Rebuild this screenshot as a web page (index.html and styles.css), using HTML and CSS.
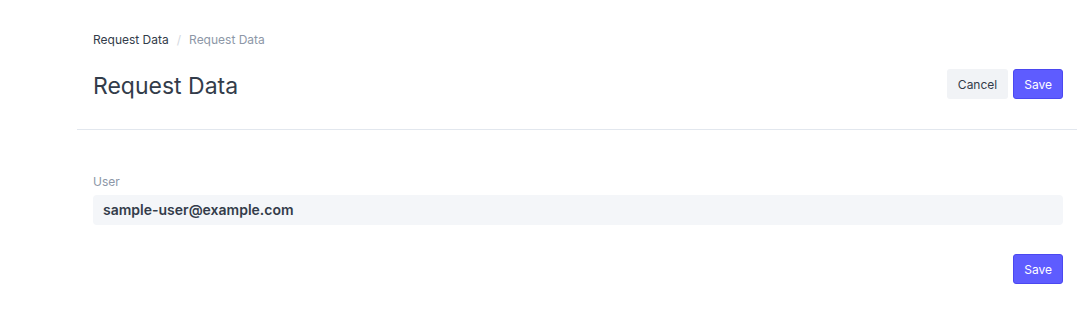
FILE: index.html
```html
<!DOCTYPE html>
<html lang="en">
<head>
    <meta charset="UTF-8">
    <meta name="viewport" content="width=device-width, initial-scale=1.0">
    <title>Request Data</title>
    <link rel="stylesheet" href="styles.css">
</head>
<body>
    <div class="page">
        <div class="page-header">
            <div class="breadcrumb">
                <span class="crumb">Request Data</span>
                <span class="crumb-sep">/</span>
                <span class="crumb current">Request Data</span>
            </div>
            <div class="title-row">
                <h1 class="page-title">Request Data</h1>
                <div class="actions">
                    <button class="btn btn-secondary">Cancel</button>
                    <button class="btn btn-primary">Save</button>
                </div>
            </div>
        </div>

        <div class="page-body">
            <div class="field">
                <label class="field-label">User</label>
                <div class="field-value">sample-user@example.com</div>
            </div>
            <div class="form-footer">
                <button class="btn btn-primary">Save</button>
            </div>
        </div>
    </div>
</body>
</html>
```

FILE: styles.css
```css
body {
    margin: 0;
    font-family: Inter, "Noto Sans", sans-serif;
    color: #333c4a;
    background-color: #fff;
}

.page {
    margin-left: 77px;
    width: 1000px;
}

.page-header {
    padding: 32px 14px 0 16px;
    border-bottom: 1px solid #e2e7ee;
}

.breadcrumb {
    display: flex;
    align-items: center;
    gap: 8px;
    font-size: 12px;
    line-height: 16px;
}

.crumb {
    color: #333c4a;
}

.crumb-sep {
    color: #d3d8e0;
}

.crumb.current {
    color: #8d97a7;
}

.title-row {
    display: flex;
    align-items: center;
    justify-content: space-between;
    padding: 21px 0 28px;
}

.page-title {
    margin: 0;
    font-size: 23px;
    font-weight: 400;
    line-height: 32px;
    color: #333c4a;
    position: relative;
    top: 1px;
}

.actions {
    display: flex;
    gap: 5px;
    position: relative;
    top: -1px;
}

.btn {
    height: 30px;
    padding: 0 10px;
    font-family: inherit;
    font-size: 12px;
    border-radius: 3px;
    border: 1px solid transparent;
    cursor: pointer;
}

.btn-secondary {
    background-color: #f1f3f6;
    color: #333c4a;
}

.btn-primary {
    background-color: #5e5cff;
    border-color: #4b48f0;
    color: #fff;
}

.page-body {
    padding: 44px 14px 0 16px;
}

.field-label {
    display: block;
    font-size: 12px;
    line-height: 16px;
    color: #8d97a7;
    margin-bottom: 5px;
}

.field-value {
    height: 30px;
    line-height: 30px;
    padding: 0 10px;
    background-color: #f4f6f9;
    border-radius: 4px;
    font-size: 14px;
    font-weight: 600;
    color: #333c4a;
}

.form-footer {
    display: flex;
    justify-content: flex-end;
    padding-top: 29px;
}
```
